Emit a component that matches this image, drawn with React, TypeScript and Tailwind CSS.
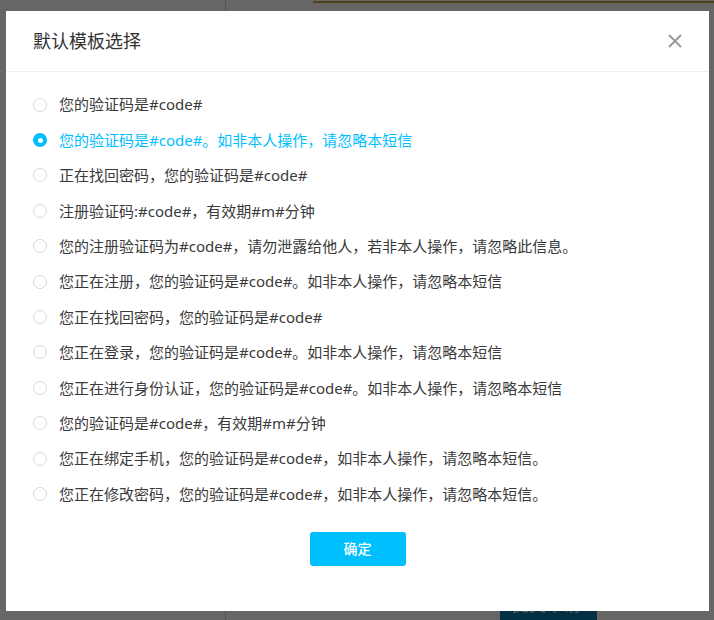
import React, { useState } from 'react';

const TEMPLATES = [
  '您的验证码是#code#',
  '您的验证码是#code#。如非本人操作，请忽略本短信',
  '正在找回密码，您的验证码是#code#',
  '注册验证码:#code#，有效期#m#分钟',
  '您的注册验证码为#code#，请勿泄露给他人，若非本人操作，请忽略此信息。',
  '您正在注册，您的验证码是#code#。如非本人操作，请忽略本短信',
  '您正在找回密码，您的验证码是#code#',
  '您正在登录，您的验证码是#code#。如非本人操作，请忽略本短信',
  '您正在进行身份认证，您的验证码是#code#。如非本人操作，请忽略本短信',
  '您的验证码是#code#，有效期#m#分钟',
  '您正在绑定手机，您的验证码是#code#，如非本人操作，请忽略本短信。',
  '您正在修改密码，您的验证码是#code#，如非本人操作，请忽略本短信。',
];

const font = { fontFamily: '"Noto Sans", "Noto Sans CJK SC", sans-serif' };

export default function App() {
  const [selected, setSelected] = useState(1);

  return (
    <div className="relative w-[714px] h-[620px] overflow-hidden bg-white" style={font}>
      {/* page behind the dialog */}
      <div className="flex h-full">
        <div className="w-[226px] border-r border-gray-300" />
        <div className="flex-1 flex flex-col">
          <div className="ml-[87px] h-[3px] border-b-2 border-[#c9a33a]" />
          <div className="flex-1" />
          <div className="ml-[274px] w-[97px] h-[30px] bg-[#0a79a8] text-[#eee] text-[17px] pl-[12px] pt-[2px]">
            提交申请
          </div>
        </div>
      </div>

      <div className="absolute inset-0 bg-black/60" />

      {/* dialog */}
      <div className="absolute left-[6px] top-[11px] w-[703px] h-[600px] bg-white flex flex-col">
        <div className="h-[61px] flex items-center justify-between pl-[27px] pr-[26px] border-b border-[#eeeeee]">
          <h2 className="text-[18px] text-[#333] font-normal">默认模板选择</h2>
          <button className="w-[16px] h-[16px] flex items-center justify-center text-[#999]">
            <svg width="14" height="14" viewBox="0 0 14 14" fill="none" stroke="currentColor" strokeWidth="2">
              <path d="M1 1L13 13M13 1L1 13" />
            </svg>
          </button>
        </div>

        <ul className="pt-[15px] pl-[27px]">
          {TEMPLATES.map((t, i) => {
            const on = i === selected;
            return (
              <li
                key={i}
                onClick={() => setSelected(i)}
                className={`h-[35.4px] flex items-center gap-[12px] text-[15px] cursor-pointer ${
                  on ? 'text-[#00bfff]' : 'text-[#3a3a3a]'
                }`}
              >
                <span
                  className={`shrink-0 w-[14px] h-[14px] rounded-full flex items-center justify-center ${
                    on ? 'bg-[#00bfff]' : 'border border-[#d9d9d9] bg-white'
                  }`}
                >
                  {on && <span className="w-[5px] h-[5px] rounded-full bg-white" />}
                </span>
                <span>{t}</span>
              </li>
            );
          })}
        </ul>

        <div className="flex justify-center pt-[20px]">
          <button className="w-[96px] h-[34px] rounded-[3px] bg-[#00bfff] text-white text-[14px] font-medium">
            确定
          </button>
        </div>
      </div>
    </div>
  );
}
